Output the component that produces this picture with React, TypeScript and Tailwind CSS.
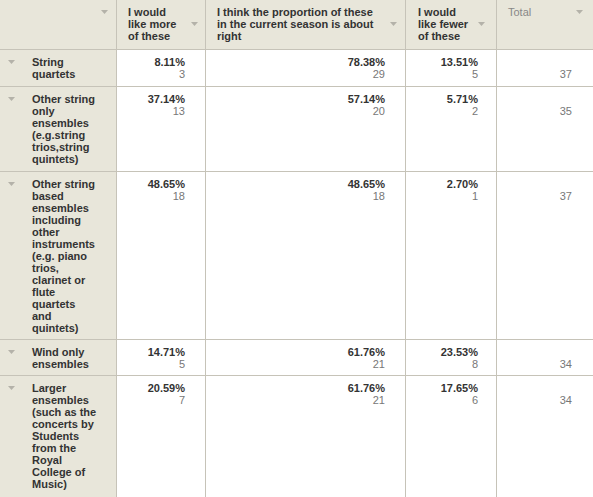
import React from "react";

const rows = [
  {
    label: "String quartets",
    cells: [
      ["8.11%", "3"],
      ["78.38%", "29"],
      ["13.51%", "5"],
    ],
    total: "37",
    pb: "pb-[6px]",
  },
  {
    label: "Other string only ensembles (e.g.string trios,string quintets)",
    cells: [
      ["37.14%", "13"],
      ["57.14%", "20"],
      ["5.71%", "2"],
    ],
    total: "35",
    pb: "pb-[6px]",
  },
  {
    label:
      "Other string based ensembles including other instruments (e.g. piano trios, clarinet or flute quartets and quintets)",
    cells: [
      ["48.65%", "18"],
      ["48.65%", "18"],
      ["2.70%", "1"],
    ],
    total: "37",
    pb: "pb-[5px]",
  },
  {
    label: "Wind only ensembles",
    cells: [
      ["14.71%", "5"],
      ["61.76%", "21"],
      ["23.53%", "8"],
    ],
    total: "34",
    pb: "pb-[5px]",
  },
  {
    label:
      "Larger ensembles (such as the concerts by Students from the Royal College of Music)",
    cells: [
      ["20.59%", "7"],
      ["61.76%", "21"],
      ["17.65%", "6"],
    ],
    total: "34",
    pb: "pb-3",
  },
];

// right padding per data column so the figures line up like the original
const cellPad = ["pr-5", "pr-5", "pr-[18px]"];

const Arrow = () => (
  <svg width="7" height="4" viewBox="0 0 7 4" className="shrink-0">
    <polygon points="0,0 7,0 3.5,4" fill="#b4b2a9" />
  </svg>
);

const App = () => {
  return (
    <div
      className="grid grid-cols-[116px_88px_199px_90px_96px] gap-px bg-[#c6c3b8] text-[11px] leading-[12px] text-[#333]"
      style={{ fontFamily: '"Liberation Sans", Arial, sans-serif' }}
    >
      {/* header row */}
      <div className="bg-[#e8e6da] pt-[6px] pb-[7px] pr-2 flex justify-end items-start">
        <div className="h-3 flex items-center">
          <Arrow />
        </div>
      </div>
      <div className="bg-[#e8e6da] pt-[6px] pb-[7px] pl-[11px] pr-[7px] flex gap-[6px]">
        <div className="flex-1 font-bold">I would like more of these</div>
        <div className="flex items-center h-9">
          <Arrow />
        </div>
      </div>
      <div className="bg-[#e8e6da] pt-[6px] pb-[7px] pl-[11px] pr-2 flex gap-[6px]">
        <div className="flex-1 font-bold">
          I think the proportion of these in the current season is about right
        </div>
        <div className="flex items-center h-9">
          <Arrow />
        </div>
      </div>
      <div className="bg-[#e8e6da] pt-[6px] pb-[7px] pl-3 pr-[11px] flex gap-[6px]">
        <div className="flex-1 font-bold">I would like fewer of these</div>
        <div className="flex items-center h-9">
          <Arrow />
        </div>
      </div>
      <div className="bg-[#e8e6da] pt-[6px] pb-[7px] pl-[11px] pr-[10px] flex items-start gap-[6px]">
        <div className="flex-1 text-[#888]">Total</div>
        <div className="flex items-center h-3">
          <Arrow />
        </div>
      </div>

      {rows.map((row, i) => (
        <React.Fragment key={i}>
          <div className={`bg-[#e8e6da] pt-[6px] pl-2 flex items-start ${row.pb}`}>
            <div className="h-3 flex items-center">
              <Arrow />
            </div>
            <div className="ml-[17px] w-[65px] font-bold">{row.label}</div>
          </div>
          {row.cells.map((c, j) => (
            <div key={j} className={`bg-white pt-[6px] text-right ${cellPad[j]}`}>
              <div className="font-bold">{c[0]}</div>
              <div className="text-[#777]">{c[1]}</div>
            </div>
          ))}
          <div className="bg-white pt-[6px] pr-[21px] text-right text-[#777]">
            <div>&nbsp;</div>
            <div>{row.total}</div>
          </div>
        </React.Fragment>
      ))}
    </div>
  );
};

export default App;
